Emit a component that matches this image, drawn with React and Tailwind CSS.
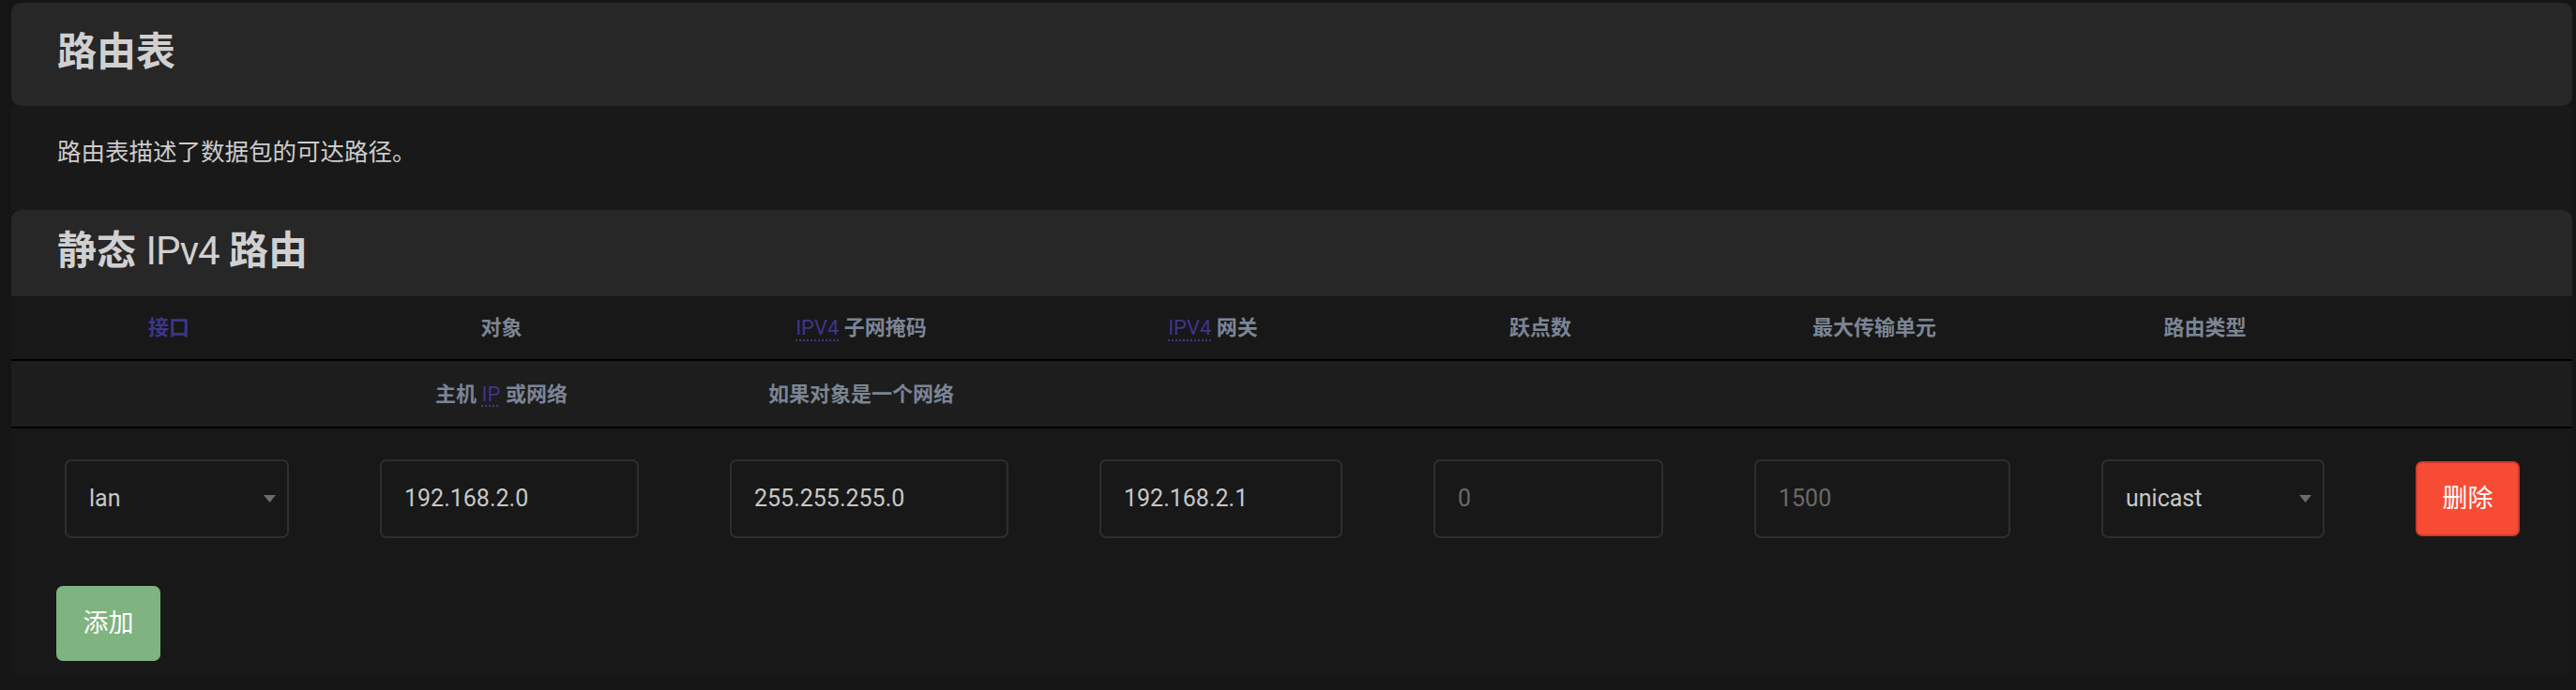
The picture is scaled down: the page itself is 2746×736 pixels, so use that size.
import React from "react";

const cols = "grid grid-cols-[336px_373px_394px_356px_342px_370px_335px_1fr]";

function Abbr({ children }) {
    return (
        <span className="font-normal text-[#3e3589] underline decoration-dotted decoration-[#3e3589] underline-offset-[5px]">
            {children}
        </span>
    );
}

function Arrow() {
    return (
        <svg width="13" height="8" viewBox="0 0 13 8" className="absolute right-[12px] top-1/2 -translate-y-1/2">
            <path d="M0 0 L13 0 L6.5 8 Z" fill="#6b6b6b" />
        </svg>
    );
}

function Field({ value, muted, select }) {
    return (
        <div className="relative h-[84px] w-full rounded-[7px] border-2 border-[#2e2e2e] bg-[#181818] flex items-center pl-[24px]">
            <span className={`text-[25px] ${muted ? "text-[#6a6a6a]" : "text-[#c8c8c8]"}`}>{value}</span>
            {select && <Arrow />}
        </div>
    );
}

export default function App() {
    const heads = [
        <span className="text-[#3d358a]">接口</span>,
        "对象",
        <><Abbr>IPV4</Abbr> 子网掩码</>,
        <><Abbr>IPV4</Abbr> 网关</>,
        "跃点数",
        "最大传输单元",
        "路由类型",
        "",
    ];
    const subs = ["", <>主机 <Abbr>IP</Abbr> 或网络</>, "如果对象是一个网络", "", "", "", "", ""];

    return (
        <div className="w-full h-[736px] overflow-hidden bg-[#151515] pt-[3px] pl-[12px] pr-[4px] font-['Roboto','Noto_Sans_CJK_SC',sans-serif]">
            {/* page title */}
            <div className="h-[110px] rounded-[10px] bg-[#272727] flex items-center pl-[49px] pb-[4px]">
                <h2 className="text-[42px] font-bold text-[#d0d0d0] leading-none">路由表</h2>
            </div>

            <div className="h-[111px] bg-[#191919] pl-[49px] pt-[37px]">
                <p className="text-[25.5px] leading-none text-[#cccccc]">路由表描述了数据包的可达路径。</p>
            </div>

            {/* static routes */}
            <div className="rounded-[10px] bg-[#181818] overflow-hidden">
                <div className="h-[92px] bg-[#272727] flex items-center pl-[49px] pb-[4px]">
                    <h3 className="text-[42px] font-bold text-[#d0d0d0] leading-none">
                        静态 <span className="font-normal tracking-[-1px]">IPv4</span> 路由
                    </h3>
                </div>

                <div className={`${cols} h-[69px] bg-[#181818] border-b-2 border-black items-center`}>
                    {heads.map((h, i) => (
                        <div key={i} className="text-center text-[22px] font-bold text-[#7b8595]">{h}</div>
                    ))}
                </div>
                <div className={`${cols} h-[72px] bg-[#1d1d1d] border-b-2 border-black items-center`}>
                    {subs.map((h, i) => (
                        <div key={i} className="text-center text-[22px] font-bold text-[#7b8595]">{h}</div>
                    ))}
                </div>

                <div className={`${cols} h-[150px] items-center`}>
                    <div className="pl-[57px] pr-[40px]"><Field value="lan" select /></div>
                    <div className="pl-[57px] pr-[40px]"><Field value="192.168.2.0" /></div>
                    <div className="pl-[57px] pr-[40px]"><Field value="255.255.255.0" /></div>
                    <div className="pl-[57px] pr-[40px]"><Field value="192.168.2.1" /></div>
                    <div className="pl-[57px] pr-[40px]"><Field value="0" muted /></div>
                    <div className="pl-[57px] pr-[40px]"><Field value="1500" muted /></div>
                    <div className="pl-[57px] pr-[40px]"><Field value="unicast" select /></div>
                    <div className="pl-[57px]">
                        <button className="w-[111px] h-[80px] rounded-[7px] bg-[#f74c33] border-2 border-[#cf3b2c] text-white text-[27px]">
                            删除
                        </button>
                    </div>
                </div>

                <div className="pt-[18px] pb-[16px] pl-[48px]">
                    <button className="w-[111px] h-[80px] rounded-[7px] bg-[#7fb37f] text-white text-[27px]">添加</button>
                </div>
            </div>
        </div>
    );
}
